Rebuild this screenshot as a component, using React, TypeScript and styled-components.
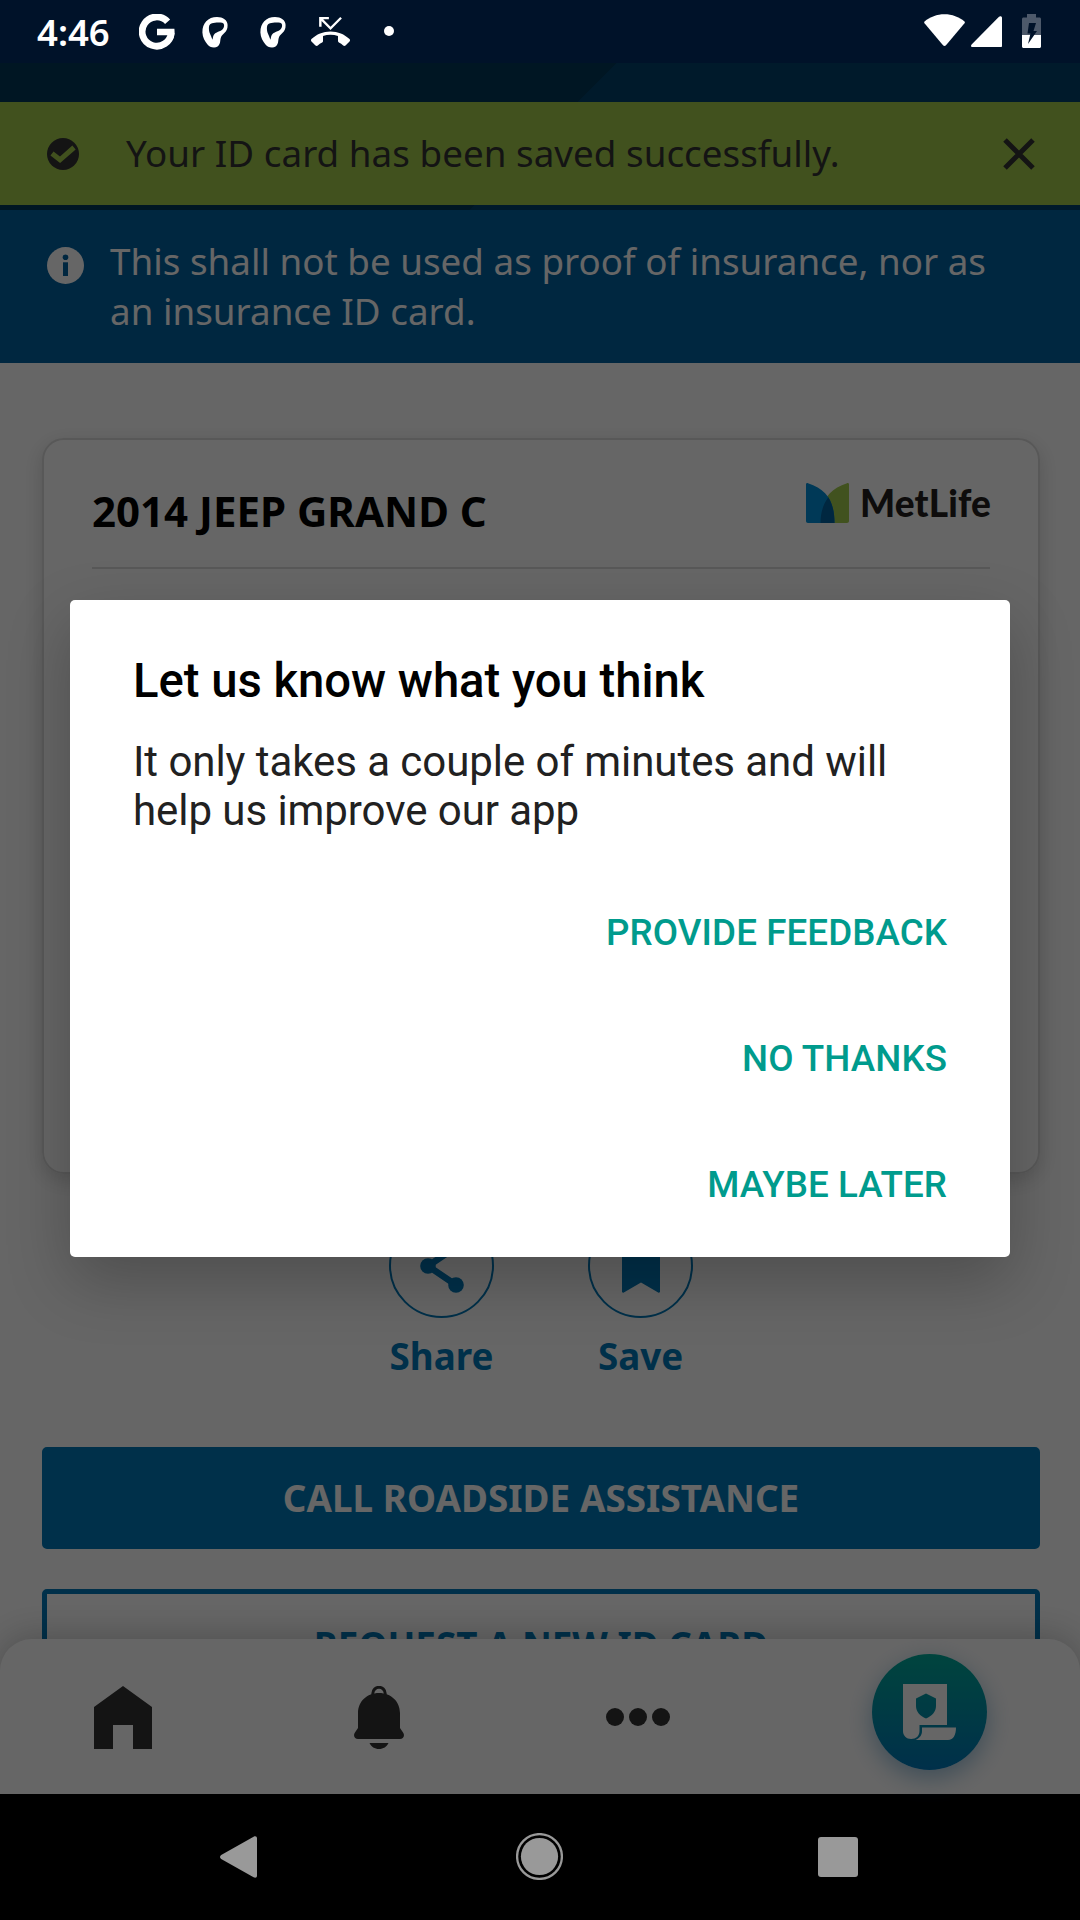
import React from "react";
import styled, { createGlobalStyle } from "styled-components";

const GlobalStyle = createGlobalStyle`
  *, *::before, *::after { box-sizing: border-box; }
  body { margin: 0; background: #000; }
  button { border: 0; background: none; padding: 0; margin: 0; font: inherit; color: inherit; }
  svg { display: block; flex: none; }
`;

const Screen = styled.div`
  width: 1080px;
  height: 1920px;
  display: flex;
  flex-direction: column;
  overflow: hidden;
  background: #000;
  font-family: "Noto Sans", sans-serif;
`;

/* ---------- Status bar ---------- */

const StatusBar = styled.header`
  flex: none;
  height: 63px;
  padding: 0 39px 0 37px;
  display: flex;
  justify-content: space-between;
  background: #001229;
  color: #fff;
`;

const StatusGroup = styled.div`
  display: flex;
  align-items: flex-start;
`;

const Clock = styled.span`
  width: 102px;
  padding-top: 7px;
  font-size: 36.5px;
  line-height: 50px;
  font-weight: 600;
`;

const StatusIcon = styled.span<{ $top: number; $gap?: number }>`
  margin-top: ${(p) => p.$top}px;
  margin-right: ${(p) => p.$gap ?? 0}px;
`;

/* ---------- App body ---------- */

const AppBody = styled.main`
  position: relative;
  flex: 1;
  min-height: 0;
  display: flex;
  flex-direction: column;
  background: #fff;
`;

const HeaderArea = styled.div`
  flex: none;
  height: 147px;
  padding-top: 39px;
  background: linear-gradient(135deg, #003757 50.2%, #00416c 50.3%);
`;

const SuccessBanner = styled.div`
  height: 103px;
  padding: 0 45px 0 47px;
  display: flex;
  align-items: center;
  background: #a3cb4c;
  color: #333;
`;

const SuccessText = styled.p`
  flex: 1;
  margin: 0 0 2px 47px;
  font-size: 36.75px;
  line-height: 50px;
  letter-spacing: 0.04px;
  white-space: nowrap;
`;

const InfoBanner = styled.div`
  flex: none;
  height: 153px;
  padding: 26px 60px 0 47px;
  display: flex;
  align-items: flex-start;
  gap: 26px;
  background: #0061a0;
  color: #fff;

  svg { margin-top: 11px; }
`;

const InfoText = styled.p`
  margin: 0;
  font-size: 36.75px;
  line-height: 50px;
  letter-spacing: 0.02px;
  white-space: nowrap;
`;

const Content = styled.div`
  flex: 1;
  min-height: 0;
  padding: 75px 40px 0 42px;
  display: flex;
  flex-direction: column;
  overflow: hidden;
`;

const IdCard = styled.section`
  flex: none;
  height: 736px;
  padding: 0 48px;
  border: 2px solid #dcdcdc;
  border-radius: 22px;
  box-shadow: 0 6px 20px rgba(0, 0, 0, 0.16);
`;

const CardHeader = styled.div`
  height: 129px;
  display: flex;
  justify-content: space-between;
  border-bottom: 2px solid #dcdcdc;
`;

const CardTitle = styled.h2`
  margin: 42px 0 0;
  font-size: 42px;
  line-height: 57px;
  font-weight: 700;
  color: #000;
  white-space: nowrap;
`;

const Brand = styled.div`
  height: 40px;
  margin: 43px -1px 0 0;
  display: flex;
  gap: 11px;
`;

const BrandName = styled.span`
  font-family: Lato, sans-serif;
  font-size: 37px;
  line-height: 40px;
  letter-spacing: 0.14px;
  font-weight: 900;
  color: #231f20;
`;

const Actions = styled.div`
  flex: none;
  height: 273px;
  padding: 39px 0 0;
  display: flex;
  justify-content: center;
  gap: 94px;
`;

const Action = styled.button`
  width: 105px;
  height: 168px;
  display: flex;
  flex-direction: column;
  align-items: center;
  gap: 13px;
  color: #0079b9;
  font-size: 36.75px;
  line-height: 50px;
  font-weight: 700;
`;

const ActionRing = styled.span`
  width: 105px;
  height: 105px;
  display: flex;
  align-items: center;
  justify-content: center;
  border: 2px solid #0079b9;
  border-radius: 50%;
`;

const WideButton = styled.button<{ $outlined?: boolean }>`
  flex: none;
  height: ${(p) => (p.$outlined ? 112 : 102)}px;
  margin-bottom: 40px;
  border: 5px solid #0079b9;
  border-radius: 5px;
  background: ${(p) => (p.$outlined ? "#fff" : "#0079b9")};
  color: ${(p) => (p.$outlined ? "#0079b9" : "#fff")};
  font-size: 36.75px;
  line-height: 50px;
  letter-spacing: ${(p) => (p.$outlined ? 0 : 0.08)}px;
  font-weight: 700;
`;

const TabBar = styled.nav`
  flex: none;
  position: relative;
  height: 155px;
  margin-top: -32px;
  padding: 0 93px 0 94px;
  display: flex;
  justify-content: space-between;
  background: #fff;
  border-radius: 32px 32px 0 0;
  box-shadow: 0 -2px 36px rgba(0, 0, 0, 0.24);
  color: #333;
`;

const Tab = styled.button<{ $top: number }>`
  height: 63px;
  margin-top: ${(p) => p.$top}px;
  display: flex;
  align-items: center;
`;

const PolicyButton = styled.button`
  width: 115px;
  height: 116px;
  margin-top: 15px;
  display: flex;
  align-items: center;
  justify-content: center;
  border-radius: 50%;
  background: linear-gradient(180deg, #00ab9b 0%, #0078b9 100%);
  box-shadow: 0 8px 24px rgba(0, 97, 160, 0.4);
`;

/* ---------- Dialog ---------- */

const Scrim = styled.div`
  position: absolute;
  inset: 0;
  display: flex;
  align-items: center;
  justify-content: center;
  background: rgba(0, 0, 0, 0.6);
`;

const Dialog = styled.section`
  width: 940px;
  height: 657px;
  padding: 53px 63px 0;
  border-radius: 5px;
  background: #fff;
  box-shadow: 0 24px 64px rgba(0, 0, 0, 0.24);
  font-family: Roboto, sans-serif;
`;

const DialogTitle = styled.h1`
  margin: 0;
  font-size: 47.25px;
  line-height: 56px;
  font-weight: 500;
  letter-spacing: -0.03px;
  color: #000;
`;

const DialogText = styled.p`
  margin: 28px 0 0;
  font-size: 42px;
  line-height: 49px;
  letter-spacing: -0.06px;
  color: #212121;
`;

const DialogActions = styled.div`
  margin-top: 34px;
  display: flex;
  flex-direction: column;
  align-items: flex-end;
`;

const DialogButton = styled.button`
  height: 126px;
  font-size: 36.75px;
  font-weight: 500;
  letter-spacing: 0.07px;
  color: #009b8d;
`;

/* ---------- System navigation ---------- */

const SystemNav = styled.footer`
  flex: none;
  height: 126px;
  padding: 0 222px 1px 220px;
  display: flex;
  align-items: center;
  justify-content: space-between;
  background: #000;
`;

/* ---------- Icons ---------- */

const GoogleIcon = () => (
  <svg width="36" height="36" viewBox="0 0 36 36">
    <path d="M28.600 7.800A14.600 14.600 0 1 0 32.300 18.500" fill="none" stroke="#fff" strokeWidth="6.800" />
    <path d="M18 14.800h17.400c.6 4-.2 8.200-1.600 11.200l-5.800-2c.7-1 1.100-1.800 1.300-2.800H18z" fill="#fff" />
  </svg>
);

const HeadIcon = () => (
  <svg width="26" height="31" viewBox="0 0 26 31">
    <path
      fill="#fff"
      fillRule="evenodd"
      d="M15 0C21 0 25.500 3 25.600 8c.1 4-1.300 6-3 7.800C20.500 18 19 19 18.500 22c-.3 1.600-.2 3-.8 4.500-.9 2.600-2.800 4-5.700 4-3 0-5-1-6.500-3C3 24.500.5 20.500.4 15.500.3 6 6 0 15 0zM10 6.200C7.300 7 6.800 9 6.900 12c.1 3 1.100 4.500 2.100 7 .6 1.400.9 2.400 1.500 3.800.4-2.300.6-4.600 2.200-6.100 2.300-2.200 7.300-2.400 8.900-6 .9-2 .8-4.200-1.400-4.900-2.800-.7-7.400-.4-10.200.4z"
    />
  </svg>
);

const MissedCallIcon = () => (
  <svg width="39" height="39" viewBox="0 0 24 24">
    <path
      fill="#fff"
      d="M6.500 5.500L12 11l7-7-1-1-6 6-4.500-4.500H11V3H5v6h1.500V5.500zm17.210 11.170C20.660 13.780 16.540 12 12 12 7.460 12 3.340 13.780.29 16.670c-.18.18-.29.43-.29.71s.11.53.29.71l2.480 2.480c.18.18.43.29.71.29.27 0 .52-.11.7-.28.79-.74 1.690-1.360 2.660-1.850.33-.16.56-.5.56-.9v-3.100C8.850 14.250 10.400 14 12 14s3.150.25 4.600.72v3.100c0 .39.23.74.56.9.98.49 1.870 1.120 2.670 1.850.18.18.43.28.7.28.28 0 .53-.11.71-.29l2.480-2.480c.18-.18.29-.43.29-.71s-.12-.52-.3-.7z"
    />
  </svg>
);

const DotIcon = () => (
  <svg width="10" height="10" viewBox="0 0 10 10">
    <circle cx="5" cy="5" r="5" fill="#fff" />
  </svg>
);

const WifiIcon = () => (
  <svg width="41" height="33" viewBox="0 0 41 33">
    <path fill="#fff" d="M.5 7.500C6 3 13 .3 20.500.3S35 3 40.500 7.500c.5.500.5 1.200 0 1.800L22 31.300c-.9 1-2.100 1-3 0L.5 9.300c-.5-.6-.5-1.300 0-1.800z" />
  </svg>
);

const SignalIcon = () => (
  <svg width="31" height="31" viewBox="0 0 31 31">
    <path fill="#fff" d="M28 .8c1.200-1.200 3-.6 3 1V30c0 .6-.4 1-1 1H1.200c-1.200 0-1.600-1.600-.6-2.600z" />
  </svg>
);

const BatteryIcon = () => (
  <svg width="19" height="34" viewBox="0 0 19 34">
    <path fill="#4d596a" d="M5 0h9v3.500h3.500c.8 0 1.500.7 1.500 1.500v16H0V5c0-.8.7-1.500 1.500-1.500H5z" />
    <path fill="#fff" d="M0 21h19v11.500c0 .8-.7 1.500-1.500 1.500h-16C.7 34 0 33.300 0 32.500z" />
    <path fill="#001229" d="M7 9h7l-2.500 8H15L6 30l2.500-10.500H5.500z" />
  </svg>
);

const CheckCircleIcon = () => (
  <svg width="32" height="32" viewBox="0 0 32 32">
    <circle cx="16" cy="16" r="16" fill="#333" />
    <path d="M5 15.500l8 6.300L27 9.500" fill="none" stroke="#a3cb4c" strokeWidth="5" />
  </svg>
);

const CloseIcon = () => (
  <svg width="32" height="32" viewBox="0 0 32 32">
    <path d="M2 2l28 28M30 2L2 30" stroke="#333" strokeWidth="5" />
  </svg>
);

const InfoIcon = () => (
  <svg width="37" height="37" viewBox="0 0 37 37">
    <circle cx="18.500" cy="18.500" r="18.500" fill="#fff" />
    <circle cx="18.500" cy="10.300" r="2.800" fill="#0061a0" />
    <path d="M16 15.300h5v13.700h-5z" fill="#0061a0" />
  </svg>
);

const MetLifeMark = () => (
  <svg width="43" height="40" viewBox="0 0 43 40">
    <path fill="#a4ce4e" d="M41 .2c1.200-.4 2 .3 2 1.300V38c0 1.200-.8 2-2 2H14.500C14.500 19 22 6 41 .2z" />
    <path fill="#0090da" d="M2 .2C.8-.2 0 .5 0 1.500V38c0 1.200.8 2 2 2h26.500C28.500 19 21 6 2 .2z" />
    <path fill="#0061a0" d="M22.300 14.300C26.700 21 28.500 30 28.500 40h-14c0-10 2.500-18.500 7.800-25.700z" />
  </svg>
);

const ShareIcon = () => (
  <svg width="44" height="54" viewBox="0 0 44 54">
    <path d="M36 8L8 27l28 19" fill="none" stroke="#0079b9" strokeWidth="6.500" />
    <circle cx="36" cy="8" r="7.800" fill="#0079b9" />
    <circle cx="8" cy="27" r="7.800" fill="#0079b9" />
    <circle cx="36" cy="46" r="7.800" fill="#0079b9" />
  </svg>
);

const BookmarkIcon = () => (
  <svg width="38" height="54" viewBox="0 0 38 54">
    <path fill="#0079b9" d="M0 2c0-1 1-2 2-2h34c1 0 2 1 2 2v50.500c0 1-.8 1.500-1.800 1L19 43.500 1.800 53.500c-1 .5-1.800 0-1.800-1z" />
  </svg>
);

const HomeIcon = () => (
  <svg width="58" height="63" viewBox="0 0 58 63">
    <path fill="#333" d="M29 0l29 21v42H39V39H19v24H0V21z" />
  </svg>
);

const BellIcon = () => (
  <svg width="50" height="63" viewBox="0 0 50 63">
    <circle cx="25" cy="7.500" r="6.200" fill="none" stroke="#333" strokeWidth="3" />
    <path
      fill="#333"
      d="M25 7c12 0 21 8.500 21 20v15l3.200 4.800c2 3-.2 6.200-3.200 6.200H4c-3 0-5.200-3.200-3.200-6.200L4 42V27C4 15.500 13 7 25 7zM15.500 57h19c-1.600 3.800-5.200 6-9.500 6s-7.900-2.200-9.500-6z"
    />
  </svg>
);

const MoreIcon = () => (
  <svg width="64" height="18" viewBox="0 0 64 18">
    <circle cx="9" cy="9" r="9" fill="#333" />
    <circle cx="32" cy="9" r="9" fill="#333" />
    <circle cx="55" cy="9" r="9" fill="#333" />
  </svg>
);

const PolicyIcon = () => (
  <svg width="53" height="56" viewBox="0 0 53 56">
    <path
      fill="#fff"
      fillRule="evenodd"
      d="M0 0h44v41H16.500v6c0 5-3.500 8-8.300 8S0 51.500 0 47zM23 9.500l-10 5V22c0 5.500 4 10 10 12.500C29 32 33 27.500 33 22v-7.500z"
    />
    <path fill="#fff" d="M19 43.500h34c0 7-2.500 12.500-8 12.500H12.500C17 54 19 51 19 47z" />
  </svg>
);

const BackIcon = () => (
  <svg width="37" height="42" viewBox="0 0 38 42" preserveAspectRatio="none">
    <path fill="#999" d="M1.200 19L34.500.7C36.500-.4 38 .5 38 2.500v37c0 2-1.500 2.900-3.500 1.800L1.200 23c-1.600-.9-1.600-3.100 0-4z" />
  </svg>
);

const HomeCircleIcon = () => (
  <svg width="47" height="47" viewBox="0 0 47 47">
    <circle cx="23.500" cy="23.500" r="22.400" fill="none" stroke="#999" strokeWidth="2.300" />
    <circle cx="23.500" cy="23.500" r="18.600" fill="#999" />
  </svg>
);

const HomeControl = styled.span`
  margin-left: 3px;
`;

const RecentsIcon = () => (
  <svg width="40" height="40" viewBox="0 0 40 40">
    <rect width="40" height="40" rx="3" fill="#999" />
  </svg>
);

const dialogOptions = ["PROVIDE FEEDBACK", "NO THANKS", "MAYBE LATER"];

export default function App() {
  return (
    <Screen>
      <GlobalStyle />
      <StatusBar>
        <StatusGroup>
          <Clock>4:46</Clock>
          <StatusIcon $top={14} $gap={27}><GoogleIcon /></StatusIcon>
          <StatusIcon $top={17} $gap={32}><HeadIcon /></StatusIcon>
          <StatusIcon $top={17} $gap={25}><HeadIcon /></StatusIcon>
          <StatusIcon $top={12} $gap={34}><MissedCallIcon /></StatusIcon>
          <StatusIcon $top={26}><DotIcon /></StatusIcon>
        </StatusGroup>
        <StatusGroup>
          <StatusIcon $top={14} $gap={6}><WifiIcon /></StatusIcon>
          <StatusIcon $top={16} $gap={20}><SignalIcon /></StatusIcon>
          <StatusIcon $top={14}><BatteryIcon /></StatusIcon>
        </StatusGroup>
      </StatusBar>

      <AppBody>
        <HeaderArea>
          <SuccessBanner>
            <CheckCircleIcon />
            <SuccessText>Your ID card has been saved successfully.</SuccessText>
            <CloseIcon />
          </SuccessBanner>
        </HeaderArea>
        <InfoBanner>
          <InfoIcon />
          <InfoText>
            This shall not be used as proof of insurance, nor as
            <br />
            an insurance ID card.
          </InfoText>
        </InfoBanner>

        <Content>
          <IdCard>
            <CardHeader>
              <CardTitle>2014 JEEP GRAND C</CardTitle>
              <Brand>
                <MetLifeMark />
                <BrandName>MetLife</BrandName>
              </Brand>
            </CardHeader>
          </IdCard>
          <Actions>
            <Action>
              <ActionRing><ShareIcon /></ActionRing>
              Share
            </Action>
            <Action>
              <ActionRing><BookmarkIcon /></ActionRing>
              Save
            </Action>
          </Actions>
          <WideButton>CALL ROADSIDE ASSISTANCE</WideButton>
          <WideButton $outlined>REQUEST A NEW ID CARD</WideButton>
        </Content>

        <TabBar>
          <Tab $top={47}><HomeIcon /></Tab>
          <Tab $top={47}><BellIcon /></Tab>
          <Tab $top={46}><MoreIcon /></Tab>
          <PolicyButton><PolicyIcon /></PolicyButton>
        </TabBar>

        <Scrim>
          <Dialog>
            <DialogTitle>Let us know what you think</DialogTitle>
            <DialogText>
              It only takes a couple of minutes and will
              <br />
              help us improve our app
            </DialogText>
            <DialogActions>
              {dialogOptions.map((label) => (
                <DialogButton key={label}>{label}</DialogButton>
              ))}
            </DialogActions>
          </Dialog>
        </Scrim>
      </AppBody>

      <SystemNav>
        <BackIcon />
        <HomeControl><HomeCircleIcon /></HomeControl>
        <RecentsIcon />
      </SystemNav>
    </Screen>
  );
}
